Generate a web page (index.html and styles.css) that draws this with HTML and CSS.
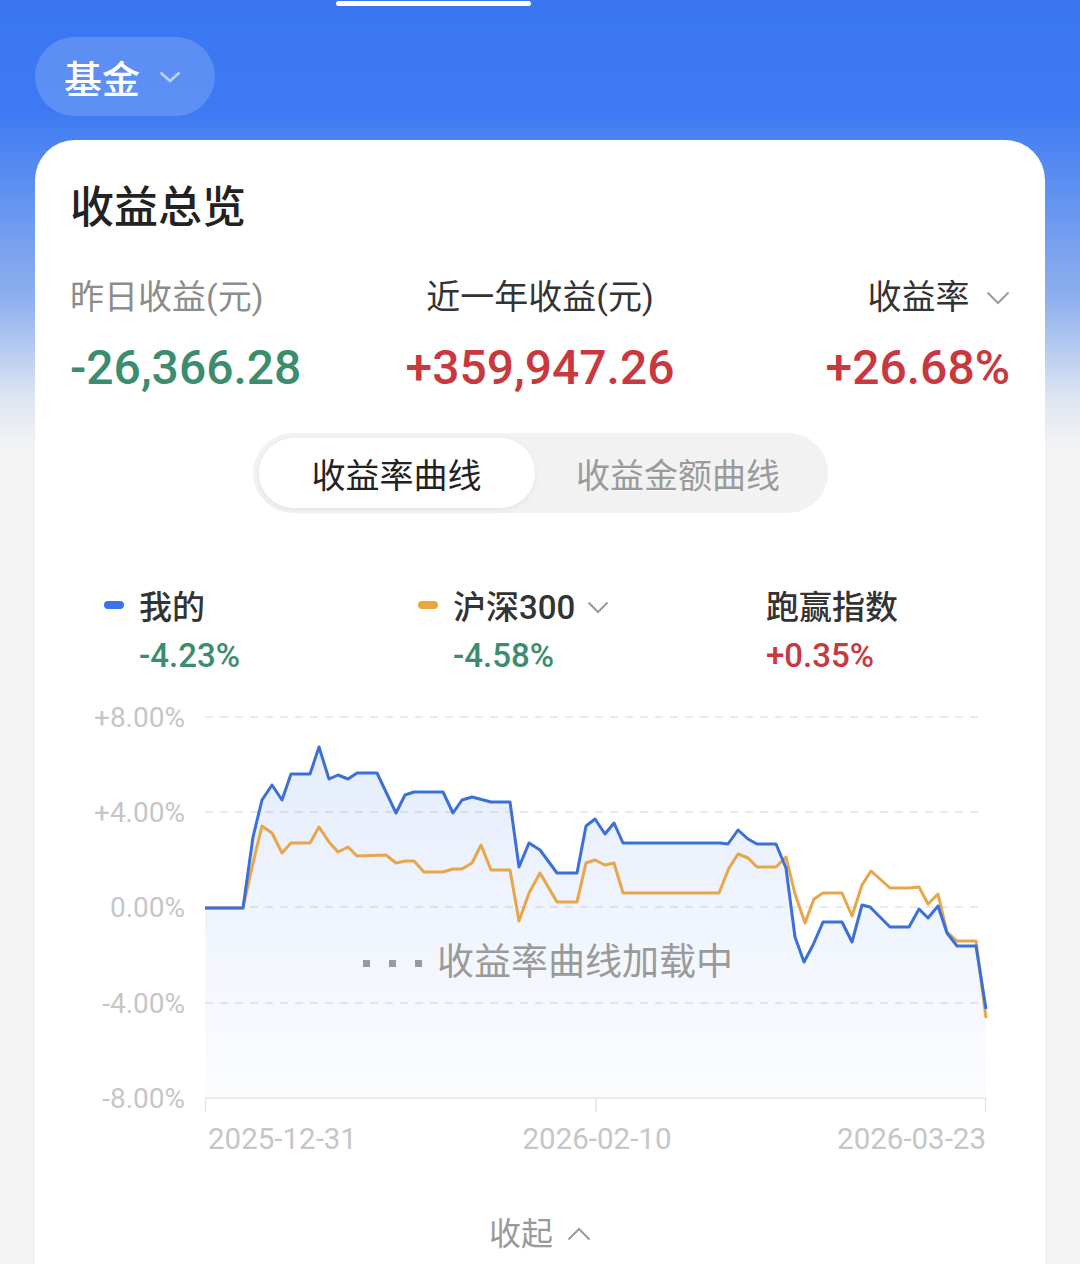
FILE: index.html
```html
<!DOCTYPE html>
<html lang="zh-CN">
<head>
    <meta charset="UTF-8">
    <meta name="viewport" content="width=device-width, initial-scale=1.0">
    <title>收益总览</title>
    <link rel="stylesheet" href="styles.css">
</head>
<body>
    <div class="handle"></div>
    <div class="type-pill">
        <span>基金</span>
        <svg class="chev" width="22" height="12" viewBox="0 0 22 12"><polyline points="1.5,1.5 11,10 20.5,1.5" /></svg>
    </div>

    <div class="card">
        <h1 class="title">收益总览</h1>

        <div class="stats">
            <div class="stat-label muted">昨日收益(元)</div>
            <div class="stat-label center">近一年收益(元)</div>
            <div class="stat-label right">收益率
                <svg class="chev-gray" width="24" height="14" viewBox="0 0 24 14"><polyline points="1.5,1.5 12,12 22.5,1.5" /></svg>
            </div>
            <div class="stat-value down">-26,366.28</div>
            <div class="stat-value up center">+359,947.26</div>
            <div class="stat-value up right">+26.68%</div>
        </div>

        <div class="tabs">
            <div class="tab active">收益率曲线</div>
            <div class="tab">收益金额曲线</div>
        </div>

        <div class="legend">
            <div class="legend-item">
                <span class="dot blue"></span>
                <span class="legend-name">我的</span>
                <span></span>
                <span class="legend-value down">-4.23%</span>
            </div>
            <div class="legend-item">
                <span class="dot orange"></span>
                <span class="legend-name">沪深300
                    <svg class="chev-gray" width="22" height="13" viewBox="0 0 22 13"><polyline points="1.5,1.5 11,11 20.5,1.5" /></svg>
                </span>
                <span></span>
                <span class="legend-value down">-4.58%</span>
            </div>
            <div class="legend-item">
                <span></span>
                <span class="legend-name">跑赢指数</span>
                <span></span>
                <span class="legend-value up">+0.35%</span>
            </div>
        </div>

        <div class="chart">
            <svg width="940" height="470" viewBox="70 690 940 470">
                <defs>
                    <linearGradient id="area" x1="0" y1="0" x2="0" y2="1">
                        <stop offset="0" stop-color="#3a74e8" stop-opacity="0.13"/>
                        <stop offset="1" stop-color="#3a74e8" stop-opacity="0.02"/>
                    </linearGradient>
                </defs>

                <g class="axis-label">
                    <text x="185" y="727" text-anchor="end">+8.00%</text>
                    <text x="185" y="822" text-anchor="end">+4.00%</text>
                    <text x="185" y="917" text-anchor="end">0.00%</text>
                    <text x="185" y="1013" text-anchor="end">-4.00%</text>
                    <text x="185" y="1108" text-anchor="end">-8.00%</text>
                </g>

                <g class="grid">
                    <line x1="205" y1="717" x2="982" y2="717"/>
                    <line x1="205" y1="812" x2="982" y2="812"/>
                    <line x1="205" y1="907" x2="982" y2="907"/>
                    <line x1="205" y1="1003" x2="982" y2="1003"/>
                </g>

                <polygon fill="url(#area)" points="205,908 243,908 253,837 262,800 272,785 282,800 291,774 310,774 319,747 329,779 338,775 348,779 357,773 377,773 396,813 405,795 414,792 443,792 453,813 462,800 472,797 491,802 510,802 519,867 529,843 540,850 557,873 577,873 586,826 595,819 605,834 614,823 623,843 720,843 728,844 738,830 748,839 757,844 776,844 786,868 795,937 804,962 813,945 823,922 842,922 852,942 862,905 870,907 890,927 909,927 919,909 928,918 938,906 947,933 957,946 976,946 986,1009 986,1098 205,1098"/>

                <g class="axis">
                    <line x1="205" y1="1098" x2="986" y2="1098"/>
                    <line x1="205.5" y1="1098" x2="205.5" y2="1112"/>
                    <line x1="596" y1="1098" x2="596" y2="1112"/>
                    <line x1="985.5" y1="1098" x2="985.5" y2="1112"/>
                </g>

                <polyline class="line-orange" points="205,908 243,908 253,863 262,826 272,833 282,853 291,843 310,843 319,827 329,842 338,852 348,847 357,856 386,855 396,863 405,861 414,861 424,872 443,872 453,869 462,869 472,863 481,845 491,870 510,870 519,921 529,893 540,873 557,902 577,902 586,863 595,860 605,865 614,863 623,893 719,893 729,868 738,854 748,858 757,867 776,867 786,857 795,894 805,923 814,899 823,893 842,893 852,916 862,885 871,871 890,888 909,888 919,887 928,904 938,894 947,932 957,941 976,941 986,1018"/>
                <polyline class="line-blue" points="205,908 243,908 253,837 262,800 272,785 282,800 291,774 310,774 319,747 329,779 338,775 348,779 357,773 377,773 396,813 405,795 414,792 443,792 453,813 462,800 472,797 491,802 510,802 519,867 529,843 540,850 557,873 577,873 586,826 595,819 605,834 614,823 623,843 720,843 728,844 738,830 748,839 757,844 776,844 786,868 795,937 804,962 813,945 823,922 842,922 852,942 862,905 870,907 890,927 909,927 919,909 928,918 938,906 947,933 957,946 976,946 986,1009"/>

                <g class="axis-label date">
                    <text x="208" y="1149">2025-12-31</text>
                    <text x="597" y="1149" text-anchor="middle">2026-02-10</text>
                    <text x="986" y="1149" text-anchor="end">2026-03-23</text>
                </g>
            </svg>

            <div class="loading">
                <span class="dots"><i></i><i></i><i></i></span>
                <span>收益率曲线加载中</span>
            </div>
        </div>

        <div class="collapse">
            <span>收起</span>
            <svg class="chev-gray" width="24" height="14" viewBox="0 0 24 14"><polyline points="1.5,12.5 12,2 22.5,12.5" /></svg>
        </div>
    </div>
</body>
</html>
```

FILE: styles.css
```css
body {
    margin: 0;
    height: 1264px;
    overflow: hidden;
    font-family: Roboto, "Noto Sans CJK SC", sans-serif;
    color: #333;
    background: linear-gradient(180deg, #3a76f2 0, #3d7af2 110px, #8fb0ee 300px, #dfe6f1 400px, #f4f4f4 450px, #f4f4f4 100%);
}
.handle {
    width: 195px;
    height: 5px;
    margin: 1px 0 0 336px;
    background: #fff;
    border-radius: 3px;
}
.type-pill {
    display: flex;
    align-items: center;
    gap: 19px;
    width: 180px;
    height: 79px;
    box-sizing: border-box;
    margin: 31px 0 0 35px;
    padding-left: 29px;
    border-radius: 40px;
    background: rgba(255, 255, 255, 0.17);
    color: #fff;
    font-size: 38px;
    font-weight: 500;
}
.type-pill .chev polyline {
    fill: none;
    stroke: rgba(255, 255, 255, 0.6);
    stroke-width: 2.5;
}
.chev-gray polyline {
    fill: none;
    stroke: #9a9a9a;
    stroke-width: 2;
}
.card {
    margin: 24px 35px 0;
    padding: 0 35px;
    height: 1140px;
    background: #fff;
    border-radius: 40px 40px 0 0;
}
.title {
    margin: 0;
    padding-top: 38px;
    font-size: 44px;
    line-height: 60px;
    font-weight: 500;
    color: #222;
}
.stats {
    display: grid;
    grid-template-columns: 1fr 1fr 1fr;
    margin-top: 37px;
}
.stat-label {
    font-size: 34px;
    line-height: 44px;
    color: #333;
}
.stat-label.muted {
    color: #8c8c8c;
}
.stat-label .chev-gray {
    margin-left: 8px;
    vertical-align: 4px;
}
.stat-value {
    margin-top: 19px;
    font-size: 48px;
    line-height: 60px;
    font-weight: 500;
}
.center {
    text-align: center;
}
.right {
    text-align: right;
}
.up {
    color: #c8383f;
}
.down {
    color: #3b8d6d;
}
.tabs {
    display: flex;
    width: 575px;
    height: 80px;
    box-sizing: border-box;
    margin: 35px auto 0;
    padding: 5px 6px;
    background: #f2f2f2;
    border-radius: 40px;
}
.tab {
    flex: 1;
    display: flex;
    align-items: center;
    justify-content: center;
    font-size: 34px;
    color: #9a9a9a;
    border-radius: 35px;
}
.tab.active {
    flex: 0 0 276px;
    background: #fff;
    color: #222;
    box-shadow: 0 2px 6px rgba(0, 0, 0, 0.06);
}
.legend {
    display: grid;
    grid-template-columns: 314px 313px 1fr;
    margin: 70px 0 0 34px;
}
.legend-item {
    display: grid;
    grid-template-columns: 35px auto;
    grid-template-rows: 44px 40px;
    row-gap: 8px;
    align-items: center;
    justify-content: start;
}
.dot {
    width: 20px;
    height: 8px;
    border-radius: 4px;
}
.dot.blue {
    background: #3a74e8;
}
.dot.orange {
    background: #eda63f;
}
.legend-name {
    font-size: 33px;
    font-weight: 500;
    color: #333;
}
.legend-name .chev-gray {
    margin-left: 4px;
    vertical-align: 5px;
}
.legend-value {
    font-size: 33px;
    font-weight: 500;
}
.chart {
    position: relative;
    margin-top: 15px;
    height: 470px;
}
.chart svg {
    display: block;
}
.axis-label {
    font-family: Roboto, sans-serif;
    font-size: 28px;
    fill: #c6c6c6;
}
.axis-label.date {
    font-size: 29.5px;
}
.grid line {
    stroke: #e4e4e4;
    stroke-width: 1.5;
    stroke-dasharray: 8 7;
}
.axis line {
    stroke: #e4e4e4;
    stroke-width: 1.5;
}
.line-blue {
    fill: none;
    stroke: #3a70d8;
    stroke-width: 3;
    stroke-linejoin: round;
}
.line-orange {
    fill: none;
    stroke: #e8a64a;
    stroke-width: 3;
    stroke-linejoin: round;
}
.loading {
    position: absolute;
    left: 293px;
    top: 250px;
    display: flex;
    align-items: center;
    gap: 15px;
    font-size: 37px;
    line-height: 46px;
    color: #9a9a9a;
}
.dots {
    display: flex;
    gap: 19px;
}
.dots i {
    width: 7px;
    height: 7px;
    background: #9a9a9a;
}
.collapse {
    display: flex;
    align-items: center;
    justify-content: center;
    gap: 14px;
    margin-top: 52px;
    font-size: 32px;
    line-height: 44px;
    color: #9a9a9a;
}
```
